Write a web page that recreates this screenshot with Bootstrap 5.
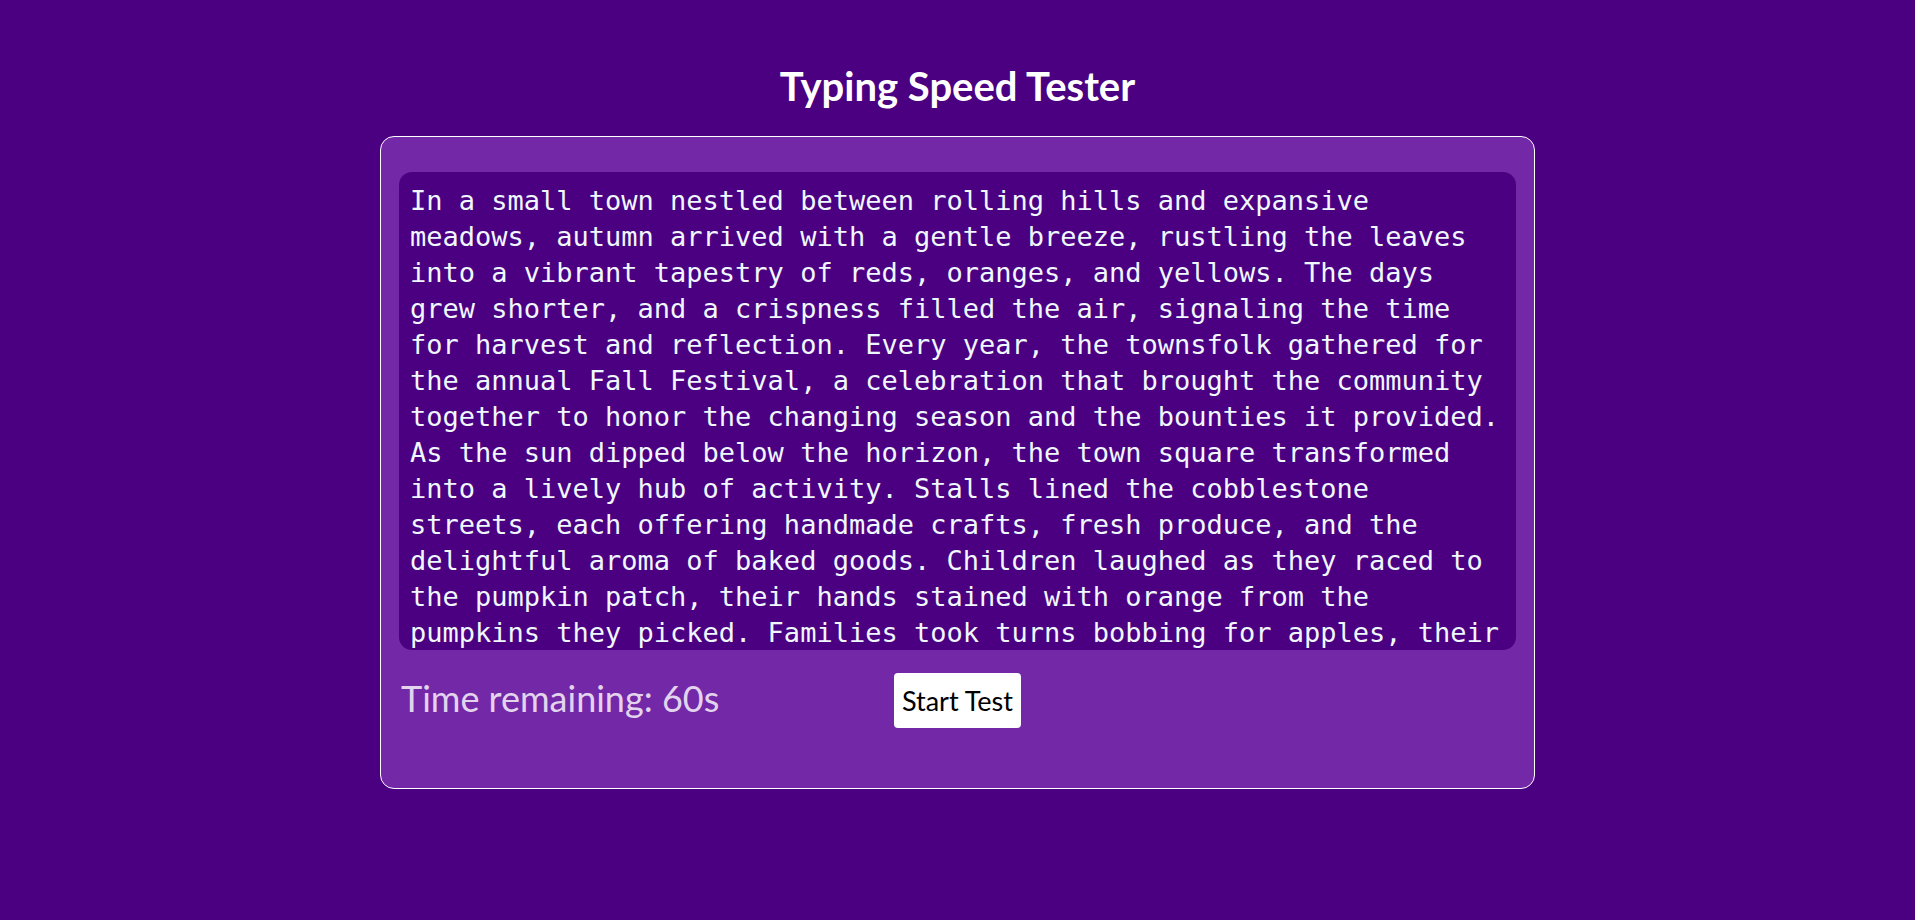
<!DOCTYPE html>
<html lang="en">
<head>
<meta charset="utf-8">
<meta name="viewport" content="width=device-width, initial-scale=1">
<title>Typing Speed Tester</title>
<link href="https://cdn.jsdelivr.net/npm/bootstrap@5.3.0/dist/css/bootstrap.min.css" rel="stylesheet">
<style>
  body { background: #4b0082; color: #fff; font-family: Lato, sans-serif; }
  .page-title { font-size: 40px; line-height: 52px; font-weight: 700; }
  .tester { max-width: 1155px; background: #7328a8; border: 1px solid #fff; border-radius: 14px; padding: 35px 18px 60px; }
  .passage { height: 478px; overflow: hidden; background: #4b0082; color: #f0f8ff; border-radius: 13px; padding: 11px 10px 0 11px; font: 27px/36px "DejaVu Sans Mono", monospace; }
  .controls { padding-top: 23px; }
  .timer { font-size: 36px; line-height: 48px; padding: 0 0 6px 2px; color: #e3d4ee; }
  .start-btn { --bs-btn-bg: #fff; --bs-btn-color: #000; --bs-btn-hover-bg: #f0e6f8; --bs-btn-border-radius: 4px; font-size: 27px; line-height: 41px; padding: 6px 7px; white-space: nowrap; }
</style>
</head>
<body>
<main class="container-fluid d-flex flex-column align-items-center pt-5">
  <h1 class="page-title text-center pt-2 mt-1 mb-4">Typing Speed Tester</h1>
  <section class="tester w-100">
    <div class="passage">In a small town nestled between rolling hills and expansive meadows, autumn arrived with a gentle breeze, rustling the leaves into a vibrant tapestry of reds, oranges, and yellows. The days grew shorter, and a crispness filled the air, signaling the time for harvest and reflection. Every year, the townsfolk gathered for the annual Fall Festival, a celebration that brought the community together to honor the changing season and the bounties it provided. As the sun dipped below the horizon, the town square transformed into a lively hub of activity. Stalls lined the cobblestone streets, each offering handmade crafts, fresh produce, and the delightful aroma of baked goods. Children laughed as they raced to the pumpkin patch, their hands stained with orange from the pumpkins they picked. Families took turns bobbing for apples, their</div>
    <div class="controls row g-0 align-items-center">
      <div class="col-5"><p class="timer mb-0">Time remaining: 60s</p></div>
      <div class="col-2 text-center"><button type="button" class="btn start-btn">Start Test</button></div>
    </div>
  </section>
</main>
<script src="https://cdn.jsdelivr.net/npm/bootstrap@5.3.0/dist/js/bootstrap.bundle.min.js"></script>
</body>
</html>
